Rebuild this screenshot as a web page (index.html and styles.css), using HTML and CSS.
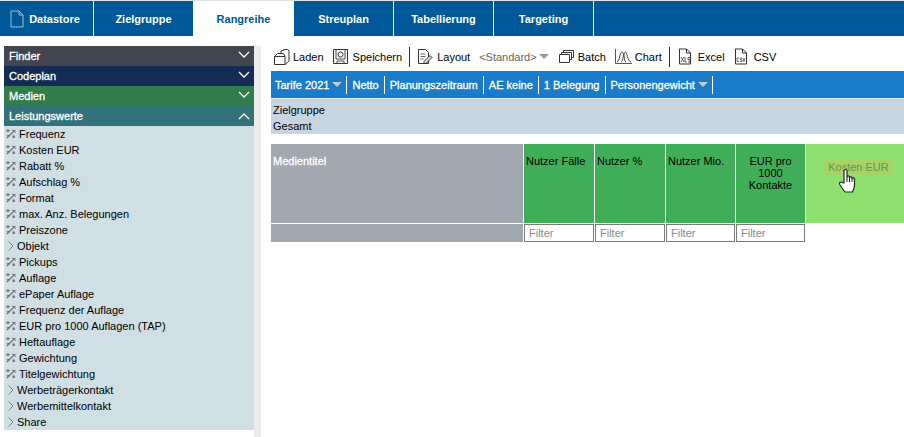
FILE: index.html
```html
<!DOCTYPE html>
<html lang="de">

<head>
    <meta charset="UTF-8">
    <link rel="stylesheet" href="styles.css">
    <title>Rangreihe</title>
</head>

<body>
    <svg class="defs" width="0" height="0">
        <symbol id="calc" viewBox="0 0 10 10">
            <path d="M1 9 8 2" fill="none" stroke="#707070" stroke-width="1.200" />
            <path d="M0 1h4v1.200H0zM1.400 0h1.200v3.500H1.400zM6 1h3.500v3H8.500V2H6zM1 6h2v2H1zM6.500 6.500h2.500v2.500H6.500z" fill="#7c7c7c" />
        </symbol>
        <symbol id="chevron" viewBox="0 0 6 10">
            <path d="M.5.5 5 5 .5 9.500" fill="none" stroke="#666" stroke-width=".8" />
        </symbol>
        <symbol id="down" viewBox="0 0 12 7">
            <path d="M1 1 6 6 11 1" fill="none" stroke="#fff" stroke-width="1.300" />
        </symbol>
    </svg>

    <div class="tabs">
        <div class="tab tab-first">
            <svg class="tab-icon" width="14" height="18" viewBox="0 0 14 18">
                <path d="M1 1h8l4 4v12H1zM9 1v4h4" fill="none" stroke="#9cc0de" stroke-width="1" />
            </svg>
            Datastore
        </div>
        <div class="tab tab-ziel">Zielgruppe</div>
        <div class="tab tab-active">Rangreihe</div>
        <div class="tab tab-std">Streuplan</div>
        <div class="tab tab-std">Tabellierung</div>
        <div class="tab tab-std">Targeting</div>
        <div class="tab-rest"></div>
    </div>

    <div class="page">
        <aside class="side">
            <div class="side-head head-finder">Finder <svg class="arrow" width="12" height="7"><use href="#down" /></svg></div>
            <div class="side-head head-code">Codeplan <svg class="arrow" width="12" height="7"><use href="#down" /></svg></div>
            <div class="side-head head-medien">Medien <svg class="arrow" width="12" height="7"><use href="#down" /></svg></div>
            <div class="side-head head-leist">Leistungswerte <svg class="arrow arrow-up" width="12" height="7"><use href="#down" /></svg></div>
            <ul class="side-list">
                <li><svg class="ico" width="10" height="10"><use href="#calc" /></svg>Frequenz</li>
                <li><svg class="ico" width="10" height="10"><use href="#calc" /></svg>Kosten EUR</li>
                <li><svg class="ico" width="10" height="10"><use href="#calc" /></svg>Rabatt %</li>
                <li><svg class="ico" width="10" height="10"><use href="#calc" /></svg>Aufschlag %</li>
                <li><svg class="ico" width="10" height="10"><use href="#calc" /></svg>Format</li>
                <li><svg class="ico" width="10" height="10"><use href="#calc" /></svg>max. Anz. Belegungen</li>
                <li><svg class="ico" width="10" height="10"><use href="#calc" /></svg>Preiszone</li>
                <li><svg class="chev" width="6" height="10"><use href="#chevron" /></svg>Objekt</li>
                <li><svg class="ico" width="10" height="10"><use href="#calc" /></svg>Pickups</li>
                <li><svg class="ico" width="10" height="10"><use href="#calc" /></svg>Auflage</li>
                <li><svg class="ico" width="10" height="10"><use href="#calc" /></svg>ePaper Auflage</li>
                <li><svg class="ico" width="10" height="10"><use href="#calc" /></svg>Frequenz der Auflage</li>
                <li><svg class="ico" width="10" height="10"><use href="#calc" /></svg>EUR pro 1000 Auflagen (TAP)</li>
                <li><svg class="ico" width="10" height="10"><use href="#calc" /></svg>Heftauflage</li>
                <li><svg class="ico" width="10" height="10"><use href="#calc" /></svg>Gewichtung</li>
                <li><svg class="ico" width="10" height="10"><use href="#calc" /></svg>Titelgewichtung</li>
                <li><svg class="chev" width="6" height="10"><use href="#chevron" /></svg>Werbeträgerkontakt</li>
                <li><svg class="chev" width="6" height="10"><use href="#chevron" /></svg>Werbemittelkontakt</li>
                <li><svg class="chev" width="6" height="10"><use href="#chevron" /></svg>Share</li>
            </ul>
        </aside>

        <main class="main">
            <div class="toolbar">
                <span class="tool tool-laden">
                    <svg width="17" height="18" viewBox="0 0 17 18">
                        <path d="M8 6V3l4-1.500h2.500L16 3v10l-4 3.500" fill="#fff" stroke="#333" stroke-width="1" />
                        <path d="M1.500 8.500l3-3h6l1.500 3" fill="#fff" stroke="#333" stroke-width="1" />
                        <path d="M1.500 8.500h10.500v8H1.500z" fill="#fff" stroke="#333" stroke-width="1" />
                    </svg>
                    Laden
                </span>
                <span class="tool tool-save">
                    <svg width="17" height="17" viewBox="0 0 17 17">
                        <path d="M1.500 1.500h14v14h-14z" fill="#f4f4f4" stroke="#333" stroke-width="1" />
                        <path d="M4 2v9h9V2M5 15v-2h7v2" fill="none" stroke="#555" stroke-width="1" />
                        <circle cx="8.500" cy="6.500" r="2.500" fill="#fff" stroke="#333" stroke-width="1" />
                    </svg>
                    Speichern
                </span>
                <span class="sep"></span>
                <span class="tool tool-layout">
                    <svg width="16" height="17" viewBox="0 0 16 17">
                        <path d="M1.500 1.500h7l3 3v11h-10z" fill="#fff" stroke="#333" stroke-width="1" />
                        <path d="M3.500 6h5M3.500 8.500h5M3.500 11h3" stroke="#666" stroke-width="1" />
                        <path d="M7 13.500 13 7.500l2 2-6 6H7z" fill="#ddd" stroke="#333" stroke-width="1" />
                    </svg>
                    Layout
                </span>
                <span class="tool-select">&lt;Standard&gt;<i class="caret caret-gray"></i></span>
                <span class="tool tool-batch">
                    <svg width="17" height="15" viewBox="0 0 17 15">
                        <path d="M5.500 1.500h10v7h-10z" fill="#fff" stroke="#333" stroke-width="1" />
                        <path d="M3.500 3.500h10v7h-10z" fill="#fff" stroke="#333" stroke-width="1" />
                        <path d="M1.500 5.500h10v8h-10z" fill="#fff" stroke="#333" stroke-width="1" />
                    </svg>
                    Batch
                </span>
                <span class="tool tool-chart">
                    <svg width="18" height="17" viewBox="0 0 18 17">
                        <path d="M1.500 1v14.500H18" fill="none" stroke="#555" stroke-width="1" />
                        <path d="M3 14C6 13 5.500 4 8 4s2 10 4 10M7 14c2 0 2.500-10 4.500-10S13 13 17 14" fill="none" stroke="#333" stroke-width=".9" />
                    </svg>
                    Chart
                </span>
                <span class="sep"></span>
                <span class="tool tool-excel">
                    <svg width="14" height="17" viewBox="0 0 14 17">
                        <path d="M1.500 1h7l4 4v11h-11zM8.500 1v4h4" fill="#fff" stroke="#333" stroke-width="1" />
                        <path d="M3 9 6 14M6 9 3 14M7 9v5h1.500M12 9.500h-2v2h2v2.500h-2" fill="none" stroke="#333" stroke-width=".8" />
                    </svg>
                    Excel
                </span>
                <span class="tool tool-csv">
                    <svg width="14" height="17" viewBox="0 0 14 17">
                        <path d="M1.500 1h7l4 4v11h-11zM8.500 1v4h4" fill="#fff" stroke="#333" stroke-width="1" />
                        <path d="M5 10H3v3.500h2M8 10H6.300v1.700H8v1.800H6.300M9 10l1 3.500 1-3.500" fill="none" stroke="#333" stroke-width=".7" />
                    </svg>
                    CSV
                </span>
            </div>

            <div class="filterbar">
                <span class="fb fb-first">Tarife 2021<i class="caret"></i></span>
                <span class="fb">Netto</span>
                <span class="fb">Planungszeitraum</span>
                <span class="fb">AE keine</span>
                <span class="fb">1 Belegung</span>
                <span class="fb fb-last">Personengewicht<i class="caret"></i></span>
            </div>

            <div class="info">
                <div>Zielgruppe</div>
                <div>Gesamt</div>
            </div>

            <div class="grid">
                <div class="th th-title">Medientitel</div>
                <div class="th">Nutzer Fälle</div>
                <div class="th">Nutzer %</div>
                <div class="th">Nutzer Mio.</div>
                <div class="th th-center">EUR pro 1000 Kontakte</div>
                <div class="th th-drop">
                    <span class="ghost">Kosten EUR</span>
                    <svg class="hand" width="20" height="26" viewBox="0 0 20 26">
                        <path d="M6 15V3c0-2 3-2 3 0v6c0-1.500 2.500-1.500 2.500 0v1c0-1.500 2.500-1.500 2.500 0v1c0-1.500 2.500-1.500 2.500 0v6c0 3-1 5-2 7H7L2 17c-1.500-2 .5-4 2-2.500z" fill="#fff" stroke="#222" stroke-width="1.200" stroke-linejoin="round" />
                        <path d="M9 9v5M11.500 10v4M14 11v3" stroke="#222" stroke-width="1" />
                    </svg>
                </div>
                <div class="filter-blank"></div>
                <div class="filter">Filter</div>
                <div class="filter">Filter</div>
                <div class="filter">Filter</div>
                <div class="filter">Filter</div>
            </div>
        </main>
    </div>
</body>

</html>
```

FILE: styles.css
```css
* {
    margin: 0;
    padding: 0;
    box-sizing: border-box;
}

html,
body {
    height: 100%;
    overflow: hidden;
}

body {
    background: white;
    color: #000;
    font-family: "Liberation Sans", Arial, sans-serif;
    font-size: 11px;
    border-top: 1px solid #dfe3e6;
}

.defs {
    display: block;
}

.tabs {
    display: flex;
    height: 35px;
    background: #005899;
}

.tab {
    display: flex;
    align-items: center;
    justify-content: center;
    border-right: 1px solid #e8eef3;
    color: white;
    font-weight: bold;
}

.tab-first {
    width: 94px;
    gap: 5px;
    padding-right: 3px;
}

.tab-ziel {
    width: 99px;
    border-right: 0;
}

.tab-active {
    width: 101px;
    background: white;
    color: #005899;
    border-right: 0;
}

.tab-std {
    width: 100px;
}

.tab-rest {
    flex: 1;
}

.page {
    display: flex;
    height: 401px;
}

.side {
    width: 257px;
    margin-left: 4px;
    margin-top: 10px;
    border-right: 7px solid #ececec;
    flex-shrink: 0;
}

.side-head {
    display: flex;
    align-items: center;
    justify-content: space-between;
    height: 20px;
    padding: 0 4px 0 5px;
    color: white;
    -webkit-text-stroke: 0.3px white;
}

.head-finder {
    background: #40454f;
}

.head-code {
    background: #142c54;
}

.head-medien {
    background: #317c4b;
}

.head-leist {
    background: #33727a;
}

.arrow {
    margin-bottom: 4px;
}

.arrow-up {
    transform: rotate(180deg);
    margin-bottom: 0;
}

.side-list {
    list-style: none;
    background: #cfdfe3;
}

.side-list li {
    display: flex;
    align-items: center;
    height: 16px;
    padding-left: 2px;
}

.ico {
    margin-right: 3px;
    flex-shrink: 0;
}

.chev {
    margin: 0 3px 0 2px;
    flex-shrink: 0;
}

.main {
    flex: 1;
    margin-left: 10px;
    margin-top: 10px;
}

.toolbar {
    display: flex;
    align-items: center;
    height: 25px;
    padding-left: 2px;
    padding-bottom: 4px;
}

.tool {
    display: flex;
    align-items: center;
    gap: 3px;
}

.tool-save {
    margin-left: 8px;
    gap: 4px;
}

.tool-layout {
    margin-left: 7px;
    gap: 4px;
}

.tool-select {
    margin-left: 9px;
    color: #666;
    display: flex;
    align-items: center;
}

.tool-batch {
    margin-left: 9px;
}

.tool-chart {
    margin-left: 8px;
}

.tool-excel {
    margin-left: 8px;
    gap: 6px;
}

.tool-csv {
    margin-left: 9px;
    gap: 6px;
}

.sep {
    width: 1px;
    height: 20px;
    background: #333;
    margin-left: 7px;
}

.caret {
    display: inline-block;
    width: 0;
    height: 0;
    margin-left: 3px;
    border-left: 5px solid transparent;
    border-right: 5px solid transparent;
    border-top: 5px solid #c6c9cc;
}

.caret-gray {
    border-top-color: #999;
    margin-left: 2px;
}

.filterbar {
    display: flex;
    align-items: center;
    height: 28px;
    background: #1a7cc8;
    border-bottom: 1px solid #eaf2f8;
    padding-left: 4px;
    color: white;
    -webkit-text-stroke: 0.3px white;
}

.fb {
    display: flex;
    align-items: center;
    height: 18px;
    padding: 0 5px;
    border-right: 1px solid white;
}

.fb-first {
    padding-left: 0;
    padding-right: 4px;
}

.fb-last {
    padding-right: 4px;
}

.info {
    height: 35px;
    background: #c7d5e0;
    padding: 3px 2px 0;
    line-height: 16px;
}

.grid {
    display: grid;
    grid-template-columns: 252px 70px 70px 69px 69px 1fr;
    grid-template-rows: 79px 18px;
    column-gap: 1px;
    row-gap: 1px;
    margin-top: 10px;
}

.th {
    position: relative;
    background: #40ad58;
    padding: 11px 2px 0;
    line-height: 12px;
}

.th-title {
    background: #a1a8b0;
    color: white;
    -webkit-text-stroke: 0.3px white;
}

.th-center {
    text-align: center;
    padding-left: 8px;
    padding-right: 8px;
}

.th-drop {
    background: #8ee070;
}

.ghost {
    display: block;
    width: 71px;
    height: 16px;
    margin: 4px 0 0 15px;
    background: #a3d465;
    color: #6f9350;
    line-height: 16px;
    text-align: center;
}

.hand {
    position: absolute;
    left: 32px;
    top: 24px;
}

.filter-blank {
    background: #a1a8b0;
}

.filter {
    border: 1px solid #7a7a7a;
    background: white;
    color: #888;
    padding: 0 4px;
    line-height: 16px;
}
```
